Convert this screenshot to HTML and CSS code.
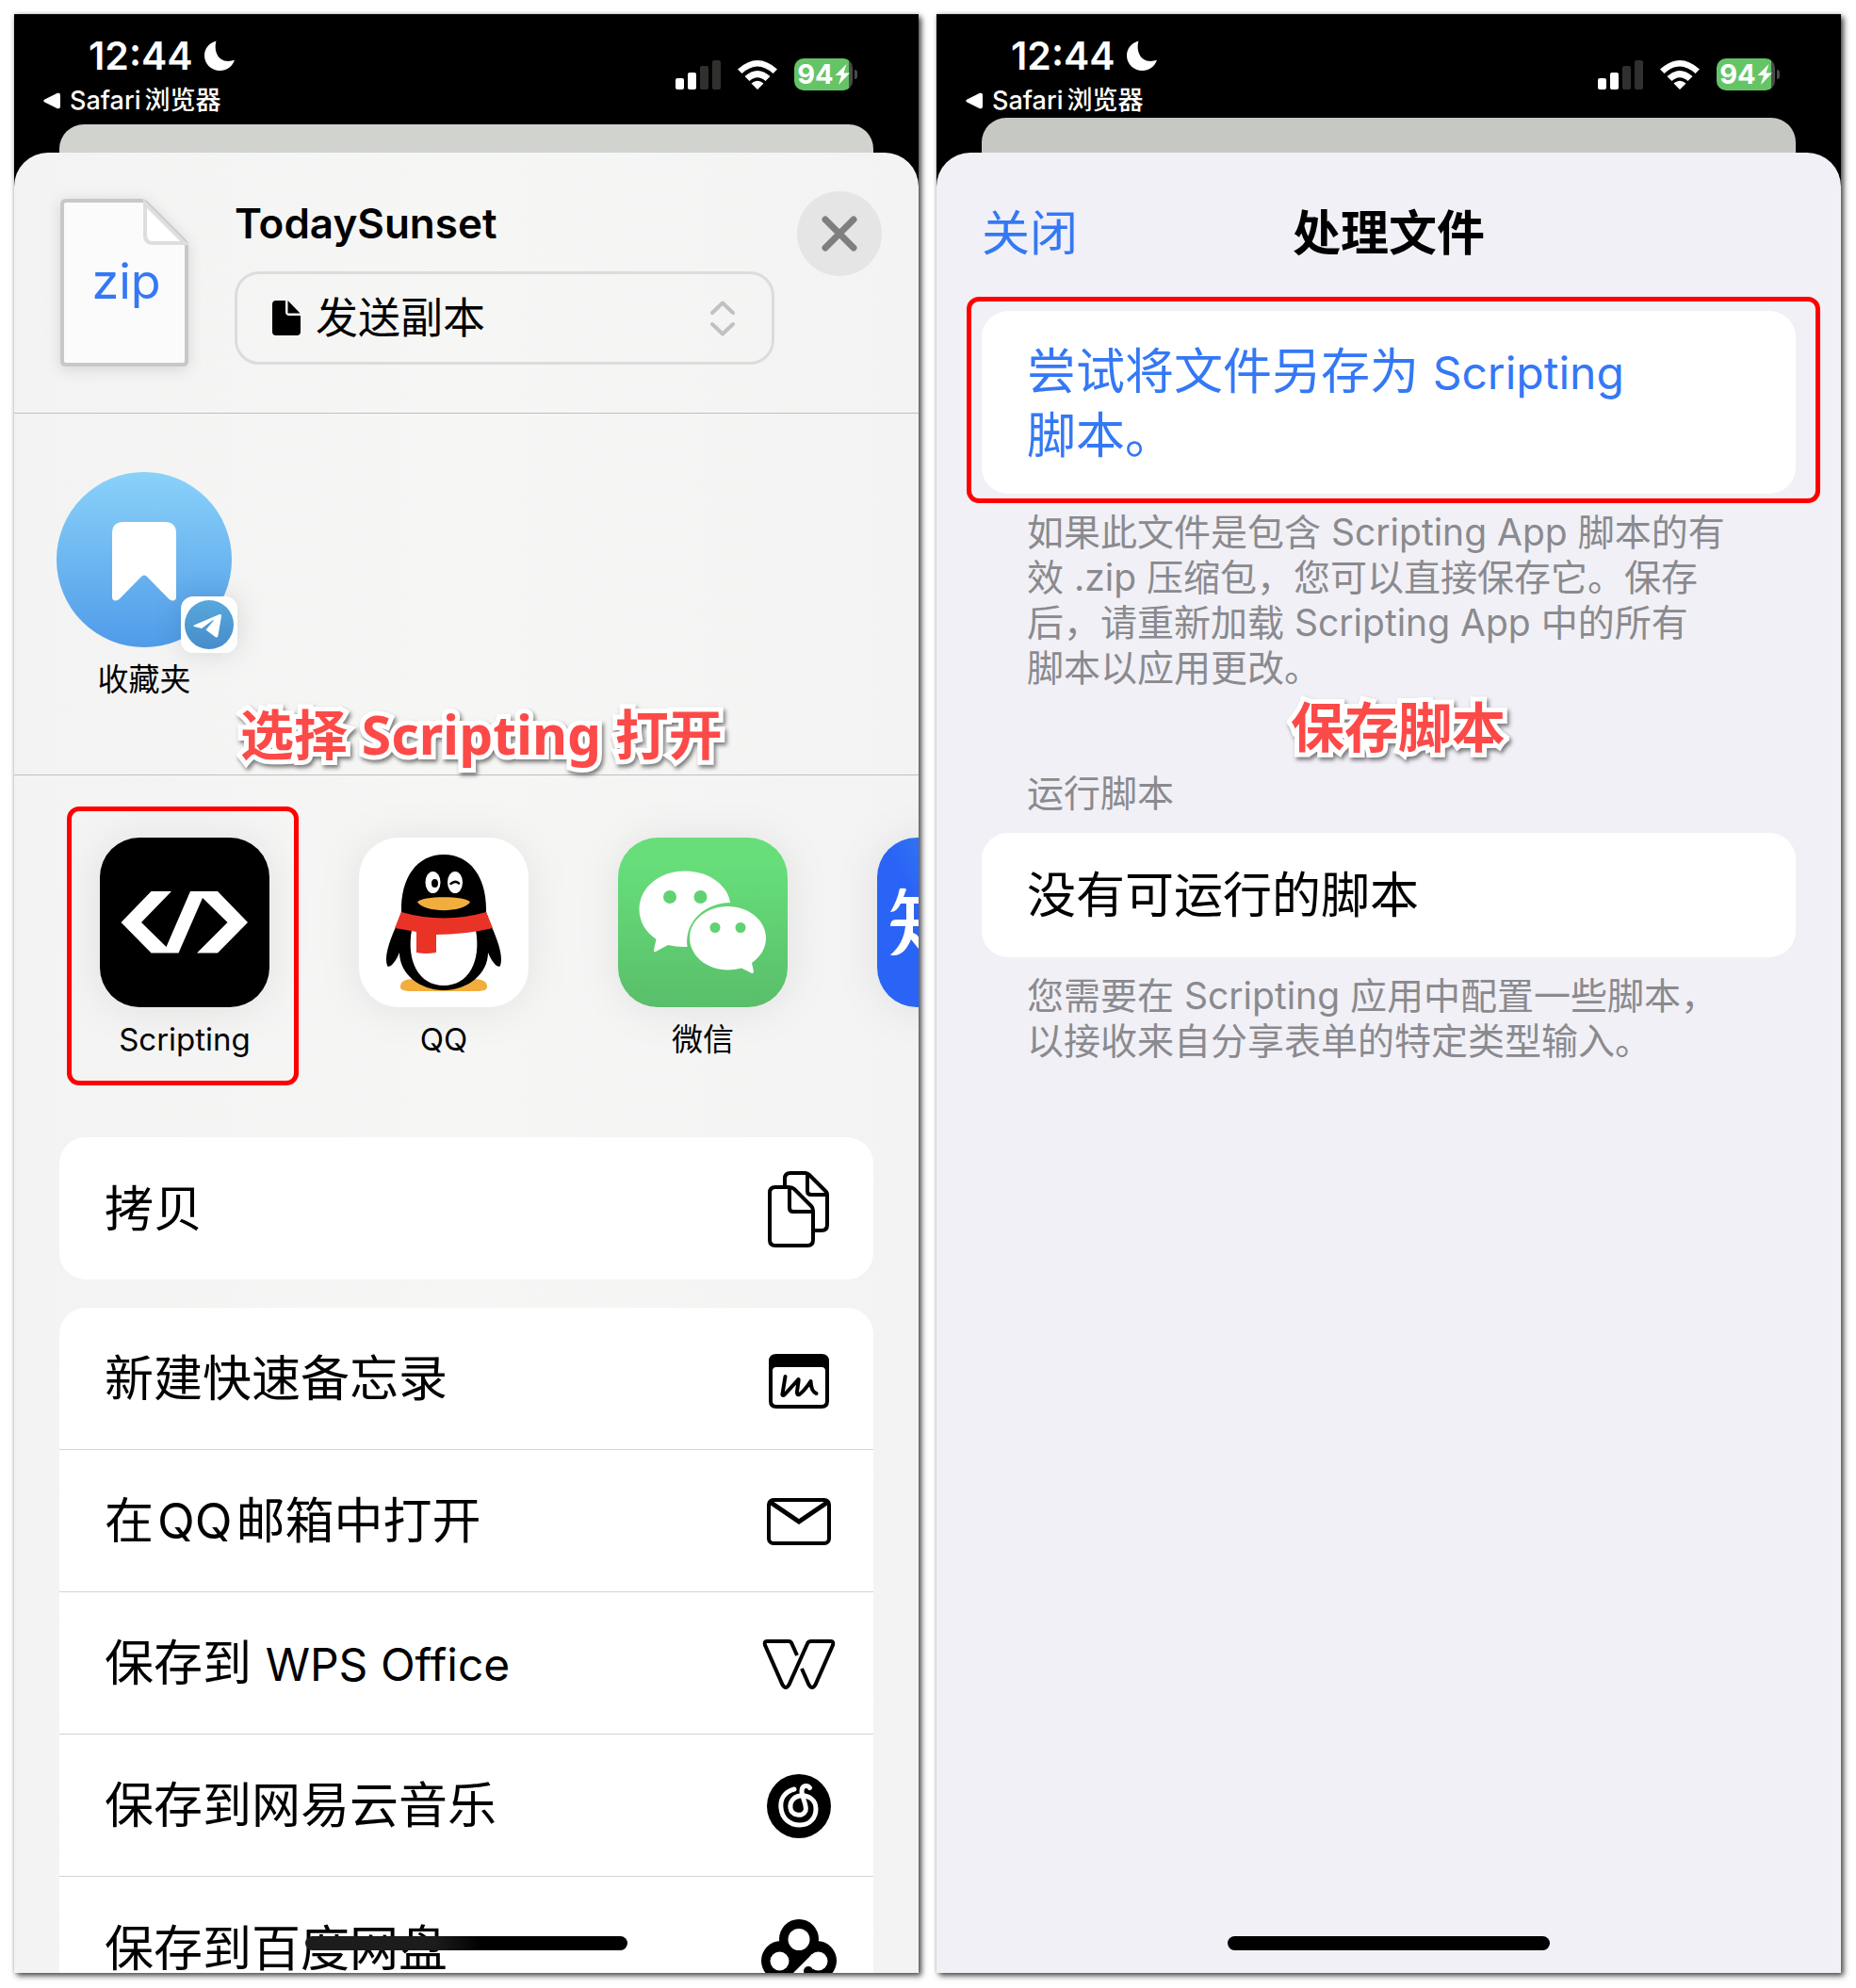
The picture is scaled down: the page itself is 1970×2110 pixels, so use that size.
FILE: index.html
```html
<!DOCTYPE html>
<html lang="zh-CN">
<head>
<meta charset="utf-8">
<title>Scripting 导入脚本</title>
<meta name="viewport" content="width=device-width, initial-scale=1">
<link rel="stylesheet" href="styles.css">
</head>
<body>
<svg class="sprite" aria-hidden="true">
  <symbol id="moon" viewBox="0 0 32 32"><path d="M12.500 0.500C10 9 13 20.500 23 21.800C26 22.200 29 21.800 32 20.800C29.500 28 23.500 32 16.500 32C7.500 32 0 25 0 16C0 8.500 5 2.500 12.500 0.500Z" fill="#fff"/></symbol>
  <symbol id="signal" viewBox="0 0 48 31"><rect y="19" width="9" height="12" rx="2" fill="#fff"/><rect x="13" y="13" width="9" height="18" rx="2" fill="#fff"/><rect x="26" y="6" width="9" height="25" rx="2" fill="#30312e"/><rect x="39" width="9" height="31" rx="2" fill="#30312e"/></symbol>
  <symbol id="wifi" viewBox="0 0 42 31"><path d="M0 9.500Q21 -9.500 42 9.500L37.500 14Q21 -1 4.500 14ZM7.500 17Q21 5 34.500 17L29.500 22Q21 14.500 12.500 22ZM14.500 24.500Q21 19 27.500 24.500L21 31Z" fill="#fff"/></symbol>
  <symbol id="bolt" viewBox="0 0 16 22"><path d="M12.500 0L0.500 12H7L4 22L16 9.500H9.500Z" fill="#fff"/></symbol>
</svg>

<main class="board">
  <section class="phone phone-share">
    <header class="status">
      <div class="status-left">
        <div class="clock"><span>12:44</span><svg class="moon"><use href="#moon"/></svg></div>
        <a class="back" href="#"><svg class="tri" viewBox="0 0 18 18"><path d="M1.500 7.600L15 .8Q18 0 18 3V15Q18 18 15 17.200L1.500 10.400Q-1 9 1.500 7.600Z" fill="#fff"/></svg><span><span class="safari">Safari</span>浏览器</span></a>
      </div>
      <div class="status-right">
        <svg class="signal"><use href="#signal"/></svg>
        <svg class="wifi"><use href="#wifi"/></svg>
        <div class="battery"><span class="charge">94<svg class="bolt"><use href="#bolt"/></svg></span></div>
      </div>
    </header>
    <div class="under"></div>
    <div class="sheet sheet-share">
      <div class="file-head">
        <svg class="file-icon" viewBox="0 0 136 178"><path d="M6 2H86Q89 2 91 4L132 45Q134 47 134 50V172Q134 176 130 176H6Q2 176 2 172V6Q2 2 6 2Z" fill="#fbfbfb" stroke="#c8c8c8" stroke-width="4"/><path d="M90 5V38Q90 47 98 47H132Z" fill="#fff" stroke="#dedede" stroke-width="4"/><text x="70" y="106" text-anchor="middle" class="file-ext">zip</text></svg>
        <div class="file-info">
          <h1 class="file-name">TodaySunset</h1>
          <div class="mode">
            <svg class="mode-icon" viewBox="0 0 30 38"><path d="M4 0H14V12Q14 16 18 16H30V33Q30 37 26 37H4Q0 37 0 33V4Q0 0 4 0ZM16.500 0L29.500 13.500H16.500Z"/></svg>
            <select class="mode-select" aria-label="发送方式"><option>发送副本</option></select>
            <svg class="mode-chevrons" viewBox="0 0 26 38"><path d="M2 13L13 2.500L24 13M2 25L13 35.500L24 25" fill="none" stroke="#c1c1c1" stroke-width="4" stroke-linecap="round" stroke-linejoin="round"/></svg>
          </div>
        </div>
        <button class="close" aria-label="关闭"><svg viewBox="0 0 38 38"><path d="M4 4L34 34M34 4L4 34" stroke="#7f7f80" stroke-width="7" stroke-linecap="round"/></svg></button>
      </div>

      <div class="people">
        <button class="person">
          <span class="avatar">
            <svg viewBox="0 0 186 186"><defs><linearGradient id="sky" x2="0" y2="1"><stop stop-color="#8ad2f9"/><stop offset="1" stop-color="#509be9"/></linearGradient></defs><circle cx="93" cy="93" r="93" fill="url(#sky)"/><path d="M71 53H115Q127 53 127 65V132Q127 137 123 136.500Q121 136.500 119 134.500L96 111Q93 108 90 111L67 134.500Q65 136.500 63 136.500Q59 137 59 132V65Q59 53 71 53Z" fill="#fff"/></svg>
            <svg class="badge" viewBox="0 0 60 60"><rect width="60" height="60" rx="13" fill="#fff"/><defs><linearGradient id="tg" x2="0" y2="1"><stop stop-color="#58a8dc"/><stop offset="1" stop-color="#468dca"/></linearGradient></defs><circle cx="30" cy="30" r="26" fill="url(#tg)"/><path d="M14 30.500L41 19Q43.500 18.500 43 21L39.500 41.500Q39 44.500 36.500 43L26.500 35.500L34.500 26Q35.500 24.500 33.500 25.500L22 34L14 32Q12.500 31.500 14 30.500Z" fill="#fff"/></svg>
          </span>
          <span class="label">收藏夹</span>
        </button>
      </div>

      <div class="apps">
        <button class="app app-marked">
          <svg class="app-icon" viewBox="0 0 180 180"><rect width="180" height="180" rx="42"/><path d="M54.500 57H76L44 90L70.500 116L96 57H125L157 90L125 122.500H103L135.500 90L109 64L83.500 122.500H54.500L22.500 90Z" fill="#fff"/></svg>
          <span class="label">Scripting</span>
        </button>
        <button class="app">
          <svg class="app-icon" viewBox="0 0 180 180"><rect width="180" height="180" rx="42" fill="#fff"/>
            <path d="M44 158Q44 149 62 150L90 158L118 150Q136 149 136 158Q137 163 124 163H56Q43 163 44 158Z" fill="#f2ae3d"/>
            <path d="M45 79C44 42 62 18 90 18C118 18 136 42 135 79L141 95C149 113 153 127 150 136C148 139 142 134 137 122C137 145 115 162 90 162C65 162 43 145 43 122C38 134 32 139 30 136C27 127 31 113 39 95Z"/>
            <path d="M56 98C50 132 64 157 90 157C116 157 130 132 124 98Z" fill="#fff"/>
            <path d="M45 79Q90 92 135 79L142 96Q113 103 82 103V122Q71 124 61 122V100L38 96Z" fill="#ea3327"/>
            <ellipse cx="78.500" cy="47.500" rx="8" ry="11.500" fill="#fff"/><ellipse cx="102" cy="47.500" rx="8" ry="11.500" fill="#fff"/><ellipse cx="80.500" cy="48.500" rx="3.500" ry="4.500"/><path d="M97.500 49Q102 45 106 48.500" fill="none" stroke="#000" stroke-width="2.500" stroke-linecap="round"/>
            <path d="M62 68.500C66 61.500 114 61.500 118 68.500C110 80 70 80 62 68.500Z" fill="#f2ae3d"/></svg>
          <span class="label">QQ</span>
        </button>
        <button class="app">
          <svg class="app-icon" viewBox="0 0 180 180"><defs><linearGradient id="wx" x2="0" y2="1"><stop offset=".15" stop-color="#67de7a"/><stop offset="1" stop-color="#59be6a"/></linearGradient></defs><rect width="180" height="180" rx="42" fill="url(#wx)"/>
            <path d="M71 35.500C98 35.500 117 52 119 69C94 69 70 88 73.500 116Q63 116.500 53 114L40 121Q37.500 122 38 119L40.500 108C29 100 22.500 89 22.500 76C22.500 53 44 35.500 71 35.500Z" fill="#fff"/>
            <path d="M116.500 73C139 73 157 88 157 106.500Q157 122 142 133L144 142Q144 145 141 143.500L131 138.500Q124 140.500 116.500 140.500C94 140.500 76 125 76 106.500C76 88 94 73 116.500 73Z" fill="#fff"/>
            <g fill="#60d272"><circle cx="55" cy="63" r="7"/><circle cx="87.500" cy="63" r="7"/><circle cx="103" cy="95.500" r="5.500"/><circle cx="130" cy="95.500" r="5.500"/></g></svg>
          <span class="label">微信</span>
        </button>
        <button class="app" aria-label="知乎">
          <svg class="app-icon" viewBox="0 0 180 180"><defs><linearGradient id="zh" x1="0.200" y1="0.300" x2="0.700" y2="0"><stop stop-color="#2a64f6"/><stop offset="1" stop-color="#448fee"/></linearGradient></defs><rect width="180" height="180" rx="42" fill="url(#zh)"/><path d="M24 54Q30 53 31 55L28 63H62V70H39V87H62V94H38V101L42 103L58 122L52 128L36 108C31 120 24 127 14 124.500Q28 113 30 94H14Q14 87 20 87H31V70H25Q21 79 14 79Q21 68 24 54Z" fill="#fff"/></svg>
        </button>
      </div>

      <div class="actions">
        <ul class="card">
          <li><button class="row"><span class="row-text">拷贝</span><svg class="row-icon" viewBox="0 0 80 88"><g fill="none" stroke="#000" stroke-width="4" stroke-linejoin="round"><path d="M25 20V12Q25 6 31 6H47Q49 6 51 8L69 26Q70 27 70 30V61Q70 67 64 67H57"/><path d="M49 7V25Q49 29 53 29H69"/><path d="M15 21H29Q33 21 35 23L53 41Q55 43 55 46V77Q55 83 49 83H15Q9 83 9 77V27Q9 21 15 21Z"/><path d="M30 22V43Q30 47 34 47H54"/></g></svg></button></li>
        </ul>
        <ul class="card">
          <li><button class="row"><span class="row-text">新建快速备忘录</span><svg class="row-icon" viewBox="0 0 80 88"><path fill-rule="evenodd" d="M16 18H64Q72 18 72 26V68Q72 76 64 76H16Q8 76 8 68V26Q8 18 16 18ZM16 32Q12 32 12 36V68Q12 72 16 72H64Q68 72 68 68V36Q68 32 64 32Z"/><path d="M25.500 42L22.500 60.500Q22 63 25 61L39 45.500Q40 44 39.500 47L38 58Q37.500 62 40.500 61Q46 57 52.500 47Q53 58 58.500 60" fill="none" stroke="#000" stroke-width="4" stroke-linecap="round" stroke-linejoin="round"/></svg></button></li>
          <li><button class="row"><span class="row-text">在<span class="joined">QQ</span>邮箱中打开</span><svg class="row-icon" viewBox="0 0 80 88"><rect x="8" y="22" width="64" height="46" rx="5" fill="none" stroke="#000" stroke-width="4"/><path d="M9 24L40 45L71 24" fill="none" stroke="#000" stroke-width="5"/></svg></button></li>
          <li><button class="row"><span class="row-text">保存到 <span class="latin">WPS Office</span></span><svg class="row-icon" viewBox="0 0 80 88"><path d="M38 36L32 22.500Q31 21 29 21H6Q3 21 4 25L22.500 67Q26 73 29.500 67L49 23.500Q50 21 53 21H74Q77 21 76 25L57.500 67Q54 73 50.500 67L43 50" fill="none" stroke="#000" stroke-width="4"/></svg></button></li>
          <li><button class="row"><span class="row-text">保存到网易云音乐</span><svg class="row-icon" viewBox="0 0 80 88"><circle cx="40" cy="45" r="34"/><path d="M35 27C24 30 20 38 21 47C22 58 30 65 41 65C52 65 58 57 58 48C58 38 50 33 41 34C34 35 30 41 31 47C32 55 44 57 47 50C49 44 43 36 43 29C43 23 49 22 51.500 25.500" fill="none" stroke="#fff" stroke-width="5" stroke-linecap="round"/></svg></button></li>
          <li><button class="row"><span class="row-text">保存到百度网盘</span><svg class="row-icon" viewBox="0 0 80 88"><g fill="#000"><circle cx="40" cy="34" r="21"/><circle cx="21" cy="57" r="21"/><circle cx="59" cy="57" r="21"/><rect x="22" y="44" width="36" height="20"/></g><g fill="#fff"><circle cx="40" cy="34.500" r="11.500"/><circle cx="19.500" cy="57.500" r="10"/><circle cx="60.500" cy="57.500" r="10"/><path d="M54 50L30 74H44L60 62Z"/></g><circle cx="50" cy="68" r="5"/></svg></button></li>
        </ul>
      </div>
    </div>
    <p class="note note-share">选择 Scripting 打开</p>
    <div class="home"></div>
  </section>

  <section class="phone phone-script">
    <header class="status">
      <div class="status-left">
        <div class="clock"><span>12:44</span><svg class="moon"><use href="#moon"/></svg></div>
        <a class="back" href="#"><svg class="tri" viewBox="0 0 18 18"><path d="M1.500 7.600L15 .8Q18 0 18 3V15Q18 18 15 17.200L1.500 10.400Q-1 9 1.500 7.600Z" fill="#fff"/></svg><span><span class="safari">Safari</span>浏览器</span></a>
      </div>
      <div class="status-right">
        <svg class="signal"><use href="#signal"/></svg>
        <svg class="wifi"><use href="#wifi"/></svg>
        <div class="battery"><span class="charge">94<svg class="bolt"><use href="#bolt"/></svg></span></div>
      </div>
    </header>
    <div class="under"></div>
    <div class="sheet sheet-script">
      <nav class="navbar">
        <button class="nav-close">关闭</button>
        <h1 class="nav-title">处理文件</h1>
      </nav>
      <button class="group group-save">尝试将文件另存为 <span class="latin">Scripting</span><br>脚本。</button>
      <p class="hint">如果此文件是包含 Scripting App 脚本的有<br>效 .zip 压缩包，您可以直接保存它。保存<br>后，请重新加载 Scripting App 中的所有<br>脚本以应用更改。</p>
      <h2 class="group-title">运行脚本</h2>
      <div class="group group-empty">没有可运行的脚本</div>
      <p class="hint">您需要在 Scripting 应用中配置一些脚本，<br>以接收来自分享表单的特定类型输入。</p>
    </div>
    <p class="note note-script">保存脚本</p>
    <div class="home"></div>
  </section>
</main>
</body>
</html>
```

FILE: styles.css
```css
* { box-sizing: border-box; }

body {
  margin: 0;
  background: #fff;
  color: #000;
  font-family: Inter, "Noto Sans CJK SC", sans-serif;
}

h1, h2, p, ul { margin: 0; padding: 0; }
ul { list-style: none; }
svg { display: block; flex: none; }

button {
  border: 0;
  padding: 0;
  background: none;
  color: inherit;
  font: inherit;
  text-align: inherit;
}

.sprite { position: absolute; width: 0; height: 0; }

.board {
  display: grid;
  grid-template-columns: 1fr 1fr;
  gap: 19px;
  height: 100vh;
  padding: 15px 16px 16px 15px;
}

.phone {
  position: relative;
  display: flex;
  flex-direction: column;
  min-width: 0;
  min-height: 0;
  background: #000;
  box-shadow: 3px 3px 6px rgba(0, 0, 0, .7), 0 0 4px rgba(0, 0, 0, .2);
}

/* status bar */
.status {
  display: flex;
  justify-content: space-between;
  height: 117px;
  flex: none;
  color: #fff;
}
.phone-script .status { height: 110px; }
.status-left { padding: 20px 0 0 31px; }
.clock {
  display: flex;
  align-items: center;
  gap: 12px;
  padding-left: 48px;
  font-size: 41px;
  line-height: 48px;
  font-weight: 600;
}
.moon { width: 32px; height: 32px; }
.back {
  display: flex;
  align-items: center;
  gap: 10px;
  color: inherit;
  text-decoration: none;
  font-size: 27px;
  line-height: 48px;
  font-weight: 500;
}
.safari { margin-right: 4px; }
.tri { width: 18px; height: 18px; }
.status-right {
  display: flex;
  align-items: center;
  gap: 18px;
  height: 34px;
  margin: 47px 65px 0 0;
}
.signal { width: 48px; height: 31px; }
.wifi { width: 42px; height: 31px; }
.battery {
  display: flex;
  align-items: center;
  gap: 2px;
}
.battery::after {
  content: "";
  width: 3px;
  height: 10px;
  border-radius: 0 3px 3px 0;
  background: #4b4b4b;
}
.charge {
  display: flex;
  align-items: center;
  justify-content: center;
  gap: 1px;
  width: 62px;
  height: 34px;
  border-radius: 10px;
  background: linear-gradient(90deg, #65c466 58px, #4b4b4b 58px);
  font-size: 29px;
  line-height: 34px;
  font-weight: 700;
}
.bolt { width: 16px; height: 22px; }

/* sheets */
.under {
  flex: none;
  height: 60px;
  margin: 0 48px -30px;
  border-radius: 26px 26px 0 0;
  background: #d1d3cf;
}
.phone-script .under {
  height: 67px;
  background: #c6c8c3;
}
.sheet {
  position: relative;
  flex: 1;
  min-height: 0;
  border-radius: 36px 36px 0 0;
}
.sheet-share {
  overflow: hidden;
  background: linear-gradient(90deg, #f3f3f3, #f6f6f5 50%, #f3f3f3);
}
.sheet-script { background: #f1f0f6; padding: 0 48px; }

.latin { font-size: 48px; }
.joined { margin: 0 4px; }

.file-head {
  display: flex;
  align-items: flex-start;
  height: 277px;
  padding: 41px 39px 0 49px;
  border-bottom: 1px solid #bfbfbf;
}
.file-icon {
  width: 136px;
  height: 178px;
  margin-top: 8px;
  filter: drop-shadow(0 3px 8px rgba(0, 0, 0, .12));
}
.file-ext { font-size: 52px; fill: #3478f6; }
.file-info {
  flex: 1;
  min-width: 0;
  margin: 6px 24px 0 49px;
}
.file-name {
  font-size: 44px;
  line-height: 56px;
  font-weight: 600;
}
.mode {
  display: flex;
  align-items: center;
  height: 99px;
  margin-top: 23px;
  padding: 0 39px 0 37px;
  border: 3px solid #dcdcdc;
  border-radius: 26px;
}
.mode-icon { width: 30px; height: 38px; }
.mode-select {
  flex: 1;
  min-width: 0;
  height: 90px;
  padding: 0 0 0 16px;
  border: 0;
  appearance: none;
  background: none;
  color: #000;
  font: inherit;
  font-size: 45px;
}
.mode-chevrons { width: 26px; height: 38px; }
.close {
  display: flex;
  align-items: center;
  justify-content: center;
  width: 90px;
  height: 90px;
  flex: none;
  border-radius: 50%;
  background: #e5e5e5;
}
.close svg { width: 38px; height: 38px; }

.people {
  display: flex;
  height: 384px;
  padding: 62px 45px 0;
  border-bottom: 1px solid #bfbfbf;
}
.person {
  display: flex;
  flex-direction: column;
  align-items: center;
  align-self: flex-start;
  gap: 10px;
}
.avatar { position: relative; width: 186px; height: 186px; }
.badge {
  position: absolute;
  right: -6px;
  bottom: -6px;
  width: 60px;
  height: 60px;
  filter: drop-shadow(0 0 14px rgba(0, 0, 0, .12));
}
.label {
  font-size: 33px;
  line-height: 48px;
}

.apps {
  display: flex;
  gap: 29px;
  height: 384px;
  padding: 33px 0 0 56px;
  overflow: hidden;
}
.app {
  display: flex;
  flex-direction: column;
  align-items: center;
  flex: none;
  width: 246px;
  height: 296px;
  padding: 33px 0 0 4px;
  gap: 10px;
}
.app-marked {
  padding-top: 28px;
  border: 5px solid #f00;
  border-radius: 13px;
}
.app-icon {
  width: 180px;
  height: 180px;
  filter: drop-shadow(0 2px 22px rgba(0, 0, 0, .08));
}

.actions {
  display: flex;
  flex-direction: column;
  gap: 30px;
  padding: 0 48px;
}
.card {
  border-radius: 28px;
  background: #fff;
}
.row {
  display: flex;
  align-items: center;
  justify-content: space-between;
  width: 100%;
  height: 151px;
  padding: 0 39px 0 48px;
  font-size: 52px;
  line-height: 52px;
}
.row-text { padding-top: 2px; }
.card li:not(:last-child) .row { border-bottom: 1px solid #d3d3d3; }
.row-icon { width: 80px; height: 88px; }

/* script import sheet */
.navbar {
  display: grid;
  grid-template-columns: 1fr auto 1fr;
  align-items: center;
  height: 168px;
  padding-bottom: 5px;
}
.nav-close {
  justify-self: start;
  color: #3478f6;
  font-size: 51px;
}
.nav-title {
  font-size: 51px;
  font-weight: 600;
}
.group {
  display: block;
  width: 100%;
  padding: 33px 48px 32px;
  border-radius: 28px;
  background: #fff;
  font-size: 52px;
  line-height: 67px;
}
.group-save {
  position: relative;
  padding: 31px 48px 28px;
  color: #3478f6;
}
.group-save::after {
  content: "";
  position: absolute;
  inset: -15px -26px -10px -16px;
  border: 5px solid #f00;
  border-radius: 13px;
}
.hint, .group-title {
  padding: 0 48px;
  color: #8a8a8e;
  font-size: 39px;
  line-height: 48px;
  font-weight: 400;
}
.hint { margin-top: 17px; }
.group-title { margin: 85px 0 18px; }

/* callouts laid over the screens */
.note {
  position: absolute;
  top: 724px;
  color: #fc4a48;
  font-family: "Noto Sans", "Noto Sans CJK SC", sans-serif;
  font-size: 57px;
  line-height: 80px;
  font-weight: 700;
  white-space: nowrap;
  -webkit-text-stroke: 10px #fff;
  paint-order: stroke fill;
  filter: drop-shadow(2px 3px 2px rgba(0, 0, 0, .5));
}
.note-share { left: 240px; }
.note-script { top: 716px; left: 376px; }

.home {
  position: absolute;
  bottom: 24px;
  left: 50%;
  width: 342px;
  height: 15px;
  margin-left: -171px;
  border-radius: 8px;
  background: #000;
}
.phone-share .home { background: linear-gradient(90deg, #1c1c1c 40%, #000 55%); }
```
